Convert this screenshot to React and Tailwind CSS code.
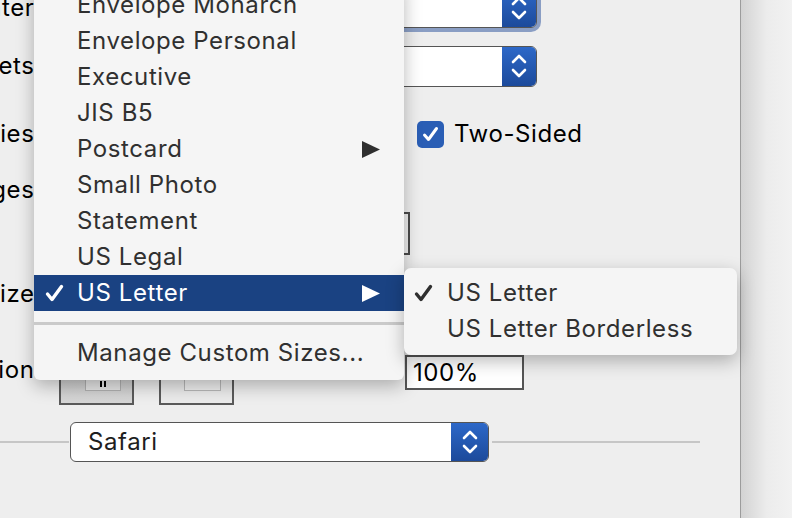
import React from "react";

function Check({ color = "#2f2f2f", className = "" }) {
  return (
    <svg width="19" height="18" viewBox="0 0 19 18" className={className}>
      <path d="M2.5 10 L7 15.5 L16.5 2.5" fill="none" stroke={color} strokeWidth="3.4" strokeLinecap="round" strokeLinejoin="round" />
    </svg>
  );
}

function Arrow({ color = "#2f2f2f" }) {
  return (
    <svg width="18" height="17" viewBox="0 0 18 17">
      <polygon points="0,0 18,8.5 0,17" fill={color} />
    </svg>
  );
}

function Stepper({ className = "" }) {
  return (
    <div className={"flex items-center justify-center bg-linear-to-b from-[#2d68c8] to-[#1c4a9b] " + className}>
      <svg width="18" height="28" viewBox="0 0 18 28">
        <path d="M3 10 L9 4 L15 10" fill="none" stroke="white" strokeWidth="2.6" strokeLinecap="round" strokeLinejoin="round" />
        <path d="M3 18 L9 24 L15 18" fill="none" stroke="white" strokeWidth="2.6" strokeLinecap="round" strokeLinejoin="round" />
      </svg>
    </div>
  );
}

const items = [
  { t: "Envelope Monarch" },
  { t: "Envelope Personal" },
  { t: "Executive" },
  { t: "JIS B5" },
  { t: "Postcard", arrow: true },
  { t: "Small Photo" },
  { t: "Statement" },
  { t: "US Legal" },
  { t: "US Letter", arrow: true, sel: true },
];

export default function App() {
  return (
    <div className="relative w-[792px] h-[518px] overflow-hidden flex bg-[#f1f1f1] font-['Inter',sans-serif] text-[24px] tracking-[0.6px] leading-none text-black">
      {/* dialog panel */}
      <div className="w-[740px] h-full bg-[#eeeeee] flex flex-col shrink-0">
        <div className="flex flex-col mt-[-14px]">
          {/* Printer */}
          <div className="h-[44px] flex items-center">
            <div className="w-[42px] shrink-0 flex justify-end whitespace-nowrap">Printer:</div>
            <div className="ml-[28px] w-[467px] h-[40px] flex rounded-[6px] ring-4 ring-[#8a9ec4] bg-white border border-[#555]">
              <div className="flex-1" />
              <Stepper className="w-[34px] h-full rounded-r-[5px]" />
            </div>
          </div>
          {/* Presets */}
          <div className="h-[44px] mt-[14px] flex items-center">
            <div className="w-[42px] shrink-0 flex justify-end whitespace-nowrap">Presets:</div>
            <div className="ml-[28px] w-[467px] h-[41px] flex rounded-[6px] bg-white border border-[#555]">
              <div className="flex-1" />
              <Stepper className="w-[34px] h-full rounded-r-[5px]" />
            </div>
          </div>
          {/* Copies */}
          <div className="h-[44px] mt-[24px] flex items-center">
            <div className="w-[42px] shrink-0 flex justify-end whitespace-nowrap">Copies:</div>
            <div className="ml-[375px] w-[27px] h-[27px] rounded-[5px] bg-[#2a5eb5] flex items-center justify-center">
              <svg width="19" height="18" viewBox="0 0 19 18">
                <path d="M3.5 10 L7.5 14.5 L15.5 3.5" fill="none" stroke="white" strokeWidth="3" strokeLinecap="round" strokeLinejoin="round" />
              </svg>
            </div>
            <div className="ml-[10px]">Two-Sided</div>
          </div>
          {/* Pages */}
          <div className="h-[40px] mt-[14px] flex items-center">
            <div className="w-[42px] shrink-0 flex justify-end whitespace-nowrap">Pages:</div>
          </div>
          <div className="mt-[2px] ml-[150px] w-[260px] h-[43px] border-2 border-[#4b4b4b]" />
          {/* Paper size */}
          <div className="h-[35px] mt-[21px] flex items-center">
            <div className="w-[42px] shrink-0 flex justify-end whitespace-nowrap">Paper Size:</div>
          </div>
          {/* Orientation */}
          <div className="h-[50px] mt-[44px] flex items-start">
            <div className="w-[42px] h-[30px] shrink-0 flex items-center justify-end whitespace-nowrap">Orientation:</div>
            <div className="ml-[17px] w-[75px] h-[50px] border-2 border-[#5a5a5a] bg-linear-to-b from-[#c8c8c8] to-[#d6d6d6] flex justify-center">
              <div className="ml-[12px] mt-[10px] w-[36px] h-[24px] bg-[#e6e6e6] border border-[#b0b0b0] flex justify-center items-end pb-[3px] gap-[2px]">
                <div className="w-[2px] h-[6px] bg-black" />
                <div className="w-[2px] h-[6px] bg-black" />
              </div>
            </div>
            <div className="ml-[25px] w-[75px] h-[50px] border-2 border-[#5a5a5a] bg-[#ebebeb] flex justify-center">
              <div className="ml-[12px] mt-[10px] w-[37px] h-[24px] bg-[#f0f0f0] border border-[#b8b8b8]" />
            </div>
            <div className="ml-[171px] w-[119px] h-[35px] border-2 border-[#555] bg-white flex items-center pl-[6px]">100%</div>
          </div>
          {/* Separator + Safari */}
          <div className="h-[40px] mt-[17px] flex items-center">
            <div className="w-[69px] h-[2px] bg-[#c6c6c6]" />
            <div className="ml-[1px] w-[419px] h-[40px] flex rounded-[6px] bg-white border border-[#555] overflow-hidden">
              <div className="flex-1 flex items-center pl-[17px] text-[#1e1e1e]">Safari</div>
              <Stepper className="w-[37px] h-full" />
            </div>
            <div className="ml-[3px] w-[208px] h-[2px] bg-[#c6c6c6]" />
          </div>
        </div>
      </div>
      <div className="w-px h-full bg-[#9c9c9c] shrink-0" />
      <div className="flex-1 h-full bg-linear-to-r from-[#d3d3d3] via-[#ececec] to-[#f2f2f2]" />

      {/* Main menu */}
      <div className="absolute left-[34px] top-[-20px] w-[370px] bg-[#f5f5f5] rounded-b-[6px] shadow-[0_6px_18px_rgba(0,0,0,0.28)] pt-[7px] pb-[9px] text-[#303030]">
        {items.map((it) => (
          <div
            key={it.t}
            className={
              "relative h-[36px] flex items-center pl-[43px] pr-[24px] " +
              (it.sel ? "bg-[#1a4282] text-white" : "")
            }
          >
            {it.sel && (
              <div className="absolute left-[11px] top-[9px]">
                <Check color="white" />
              </div>
            )}
            <div className="flex-1 whitespace-nowrap">{it.t}</div>
            {it.arrow && <Arrow color={it.sel ? "white" : "#2f2f2f"} />}
          </div>
        ))}
        <div className="mt-[11px] h-[3px] bg-[#cacaca]" />
        <div className="mt-[10px] h-[36px] flex items-center pl-[43px] whitespace-nowrap">Manage Custom Sizes...</div>
      </div>

      {/* Submenu */}
      <div className="absolute left-[404px] top-[268px] w-[333px] h-[87px] bg-[#f5f5f5] rounded-[7px] shadow-[0_6px_18px_rgba(0,0,0,0.28)] pt-[7px] text-[#303030]">
        <div className="relative h-[36px] flex items-center pl-[43px]">
          <div className="absolute left-[10px] top-[9px]">
            <Check color="#2f2f2f" />
          </div>
          US Letter
        </div>
        <div className="h-[36px] flex items-center pl-[43px] whitespace-nowrap">US Letter Borderless</div>
      </div>
    </div>
  );
}
